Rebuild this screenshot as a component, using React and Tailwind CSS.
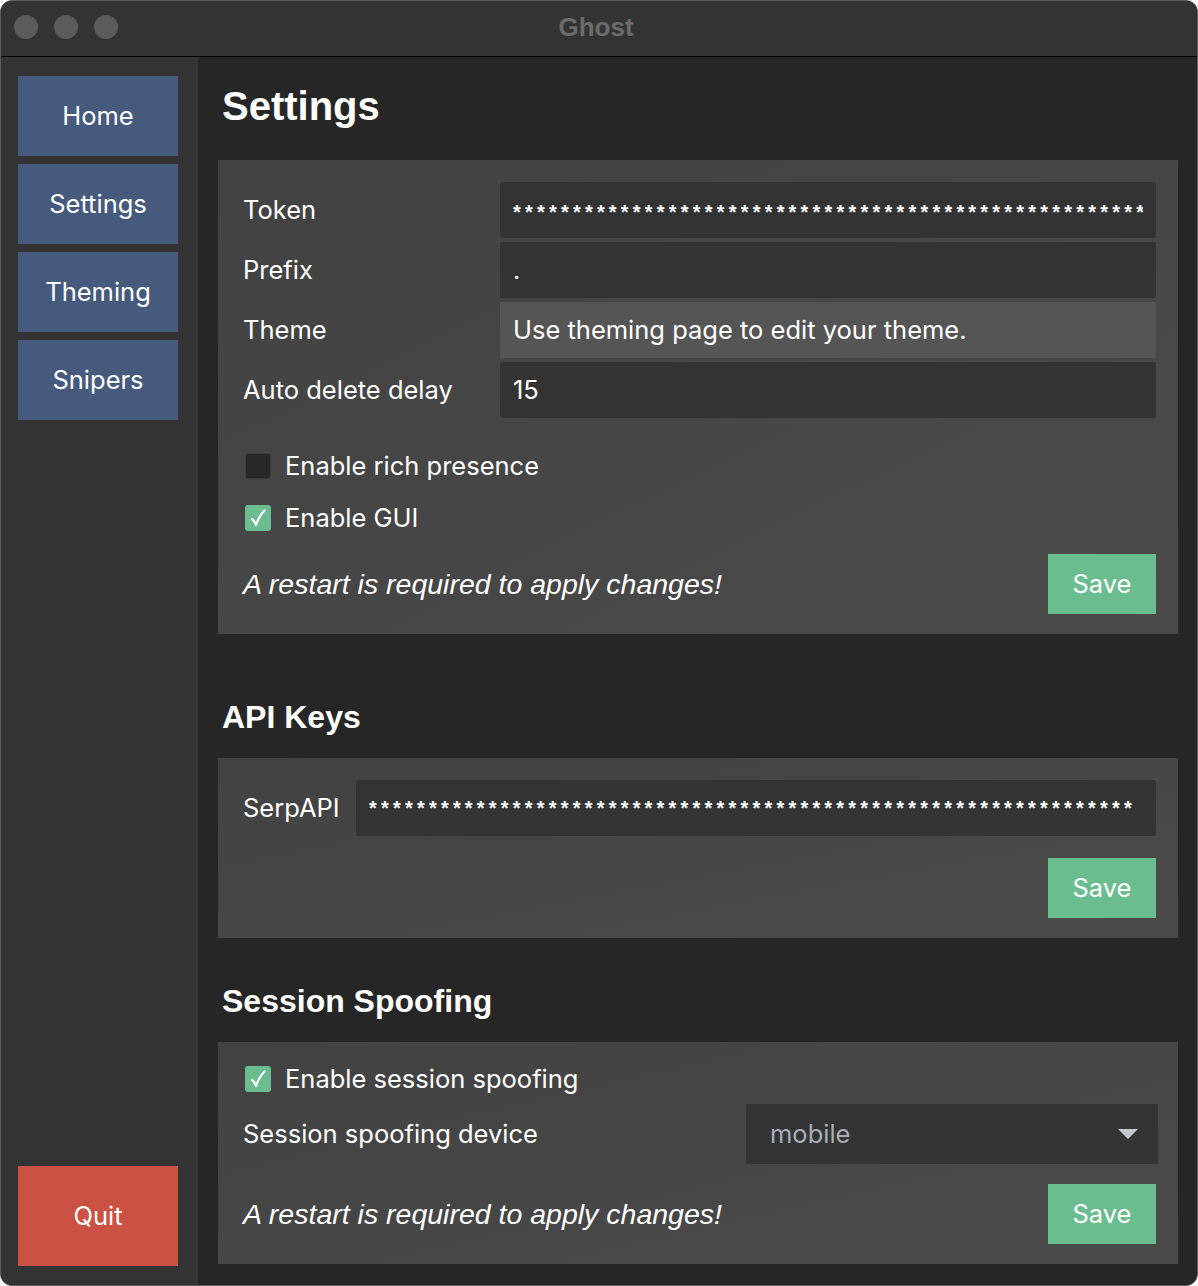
import React from 'react'

const sans = { fontFamily: 'Inter, "Noto Sans", sans-serif' }
const helv = { fontFamily: '"Liberation Sans", Arial, sans-serif' }

const NavButton = ({ label, className = 'bg-[#455a7c] h-[80px]' }) => (
    <button className={`w-[160px] ${className} text-white text-[25.5px] flex items-center justify-center`} style={sans}>
        {label}
    </button>
)

const Checkbox = ({ checked, label }) => (
    <div className="flex items-center h-[40px] pl-[2px]">
        {checked ? (
            <div className="w-[26px] h-[26px] rounded-[3px] bg-[#6bbd8f] flex items-center justify-center">
                <svg width="16" height="18" viewBox="0 0 16 18">
                    <path d="M2 10 C3.5 11 5 13 6 16 C8 10 11 5 14.5 1.5" fill="none" stroke="#fff" strokeWidth="2.2" strokeLinecap="round" strokeLinejoin="round" />
                </svg>
            </div>
        ) : (
            <div className="w-[26px] h-[26px] rounded-[3px] bg-[#272727] border border-[#3c3c3c]" />
        )}
        <span className="ml-[14px] text-[25.5px] text-white" style={sans}>{label}</span>
    </div>
)

// masked value, clipped inside the field padding
const Stars = ({ count }) => (
    <div className="min-w-0 flex-1 overflow-hidden whitespace-nowrap">
        <span className="text-white text-[20px] font-bold tracking-[4.2px]" style={helv}>
            {'*'.repeat(count)}
        </span>
    </div>
)

const Field = ({ label, children, light }) => (
    <div className="flex items-center">
        <div className="w-[257px] shrink-0 text-[25.5px] text-white" style={sans}>{label}</div>
        <div className={`flex-1 min-w-0 h-[56px] ${light ? 'bg-[#555555]' : 'bg-[#333333]'} rounded-[2px] flex items-center px-[13px] overflow-hidden text-[25.5px] text-white`} style={sans}>
            {children}
        </div>
    </div>
)

const SaveButton = () => (
    <button className="w-[108px] h-[60px] shrink-0 bg-[#6bbd8f] text-white text-[25.5px] flex items-center justify-center" style={sans}>
        Save
    </button>
)

const Footer = () => (
    <div className="flex items-center justify-between">
        <span className="italic text-white text-[28.5px]" style={helv}>A restart is required to apply changes!</span>
        <SaveButton />
    </div>
)

const SectionHeading = ({ children, className }) => (
    <div className={`flex items-end pl-[4px] ${className}`}>
        <h2 className="text-white font-bold text-[32px] leading-[36px]" style={helv}>{children}</h2>
    </div>
)

export default function App() {
    return (
        <div className="w-[1198px] h-[1286px] bg-white">
            <div className="w-full h-full rounded-[12px] overflow-hidden border border-[#5e5e5e] flex flex-col bg-[#262626]">
                {/* title bar */}
                <div className="h-[56px] shrink-0 bg-[#333333] border-b border-black relative flex items-center justify-center pr-[6px] pb-[2px]">
                    <div className="absolute left-[13px] top-[14px] flex gap-[16px]">
                        <div className="w-[24px] h-[24px] rounded-full bg-[#5b5b5b]" />
                        <div className="w-[24px] h-[24px] rounded-full bg-[#5b5b5b]" />
                        <div className="w-[24px] h-[24px] rounded-full bg-[#5b5b5b]" />
                    </div>
                    <span className="text-[#6b6b6b] font-bold text-[26px]" style={helv}>Ghost</span>
                </div>

                <div className="flex flex-1 min-h-0">
                    {/* sidebar */}
                    <div className="w-[197px] shrink-0 bg-[#333333] flex flex-col items-start pl-[17px] pt-[19px] pb-[19px]">
                        <div className="flex flex-col gap-[8px]">
                            <NavButton label="Home" />
                            <NavButton label="Settings" />
                            <NavButton label="Theming" />
                            <NavButton label="Snipers" />
                        </div>
                        <div className="flex-1" />
                        <NavButton label="Quit" className="bg-[#cb5142] h-[100px]" />
                    </div>

                    {/* main */}
                    <div className="flex-1 min-w-0 pl-[20px] pr-[19px]">
                        <div className="h-[103px] flex items-center pb-[6px] pl-[4px]">
                            <h1 className="text-white font-bold text-[40px]" style={helv}>Settings</h1>
                        </div>

                        <div className="bg-gradient-to-br from-[#424242] to-[#4a4a4a] pt-[22px] pl-[25px] pr-[22px] pb-[20px]">
                            <div className="flex flex-col gap-[4px]">
                                <Field label="Token"><Stars count={60} /></Field>
                                <Field label="Prefix">.</Field>
                                <Field label="Theme" light>Use theming page to edit your theme.</Field>
                                <Field label="Auto delete delay">15</Field>
                            </div>
                            <div className="mt-[28px] flex flex-col gap-[12px]">
                                <Checkbox label="Enable rich presence" />
                                <Checkbox checked label="Enable GUI" />
                            </div>
                            <div className="mt-[16px]">
                                <Footer />
                            </div>
                        </div>

                        <SectionHeading className="h-[124px] pb-[23px]">API Keys</SectionHeading>

                        <div className="bg-gradient-to-br from-[#424242] to-[#4a4a4a] pt-[22px] pl-[25px] pr-[22px] pb-[20px]">
                            <div className="flex items-center">
                                <div className="w-[113px] shrink-0 text-[25.5px] text-white" style={sans}>SerpAPI</div>
                                <div className="flex-1 min-w-0 h-[56px] bg-[#333333] rounded-[2px] flex items-center px-[13px] overflow-hidden">
                                    <Stars count={64} />
                                </div>
                            </div>
                            <div className="mt-[22px] flex justify-end">
                                <SaveButton />
                            </div>
                        </div>

                        <SectionHeading className="h-[104px] pb-[23px]">Session Spoofing</SectionHeading>

                        <div className="bg-gradient-to-br from-[#424242] to-[#4a4a4a] pt-[17px] pl-[25px] pr-[20px] pb-[20px]">
                            <Checkbox checked label="Enable session spoofing" />
                            <div className="mt-[5px] flex items-center justify-between">
                                <span className="text-[25.5px] text-white" style={sans}>Session spoofing device</span>
                                <div className="w-[412px] h-[60px] shrink-0 bg-[#333333] flex items-center justify-between pl-[24px] pr-[20px]">
                                    <span className="text-[25.5px] text-[#a9aeb6]" style={sans}>mobile</span>
                                    <svg width="20" height="10" viewBox="0 0 20 10">
                                        <path d="M0 0 H20 L10 10 Z" fill="#c3c7cd" />
                                    </svg>
                                </div>
                            </div>
                            <div className="mt-[20px] pr-[2px]">
                                <Footer />
                            </div>
                        </div>
                    </div>
                </div>
            </div>
        </div>
    )
}
